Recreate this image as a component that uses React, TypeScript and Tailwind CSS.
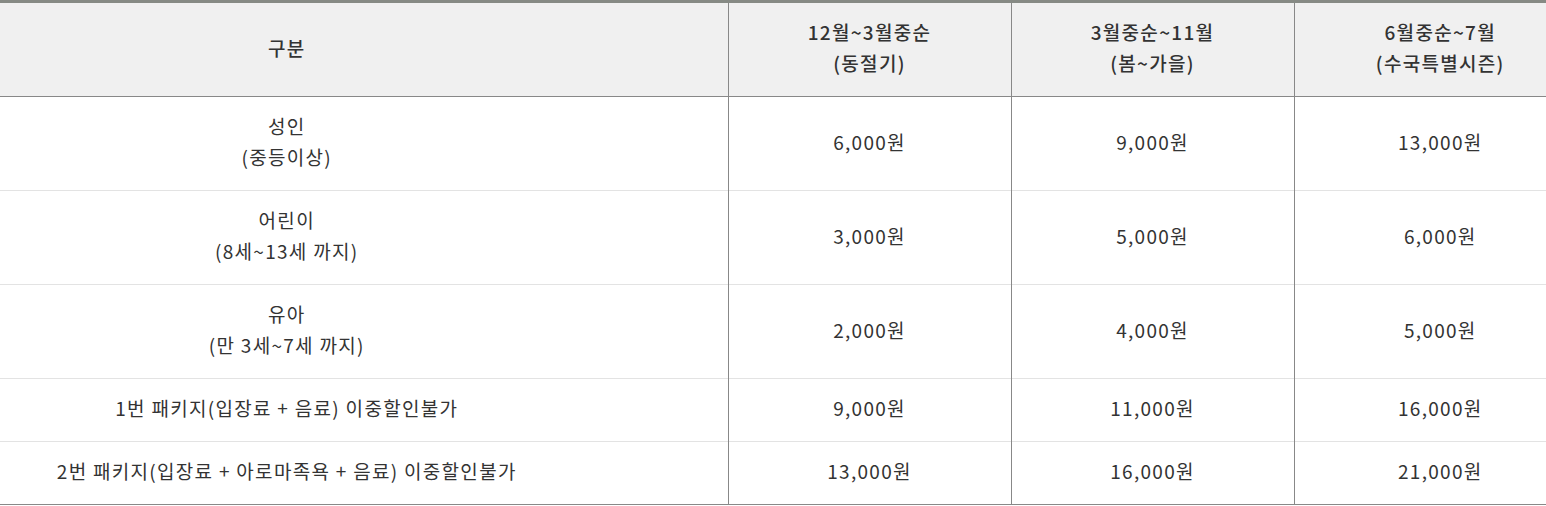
import React from "react";

const rows: { label: string[]; prices: string[]; tall: boolean }[] = [
  { label: ["성인", "(중등이상)"], prices: ["6,000원", "9,000원", "13,000원"], tall: true },
  { label: ["어린이", "(8세~13세 까지)"], prices: ["3,000원", "5,000원", "6,000원"], tall: true },
  { label: ["유아", "(만 3세~7세 까지)"], prices: ["2,000원", "4,000원", "5,000원"], tall: true },
  { label: ["1번 패키지(입장료 + 음료) 이중할인불가"], prices: ["9,000원", "11,000원", "16,000원"], tall: false },
  { label: ["2번 패키지(입장료 + 아로마족욕 + 음료) 이중할인불가"], prices: ["13,000원", "16,000원", "21,000원"], tall: false },
];

const headers = [
  ["12월~3월중순", "(동절기)"],
  ["3월중순~11월", "(봄~가을)"],
  ["6월중순~7월", "(수국특별시즌)"],
];

export default function App() {
  return (
    <div className="w-[1546px] h-[506px] overflow-hidden bg-white">
      <table
        className="-ml-[154px] w-[1740px] table-fixed border-collapse text-[19px] leading-[31px] tracking-[1.3px] text-[#333]"
        style={{ fontFamily: '"Noto Sans CJK KR", "Noto Sans", sans-serif' }}
      >
        <colgroup>
          <col className="w-[882px]" />
          <col className="w-[283px]" />
          <col className="w-[283px]" />
          <col className="w-[292px]" />
        </colgroup>
        <thead>
          <tr className="h-[95px] border-t-[3px] border-t-[#868a84] bg-[#f0f0f0] border-b border-b-[#888]">
            <th className="font-medium text-center align-middle p-0 pb-[5px]">구분</th>
            {headers.map((h, i) => (
              <th key={i} className="font-medium text-center align-middle p-0 pb-[5px] border-l border-l-[#888]">
                {h.map((l, j) => (
                  <div key={j}>{l}</div>
                ))}
              </th>
            ))}
          </tr>
        </thead>
        <tbody>
          {rows.map((r, i) => (
            <tr
              key={i}
              className={`${r.tall ? "h-[94px]" : "h-[63px]"} ${
                i === rows.length - 1 ? "border-b border-b-[#888]" : "border-b border-b-[#e3e3e3]"
              }`}
            >
              <td className="text-center align-middle p-0 pb-[5px]">
                {r.label.map((l, j) => (
                  <div key={j} className="whitespace-pre">{l}</div>
                ))}
              </td>
              {r.prices.map((p, j) => (
                <td key={j} className="text-center align-middle p-0 pb-[5px] border-l border-l-[#888]">
                  {p}
                </td>
              ))}
            </tr>
          ))}
        </tbody>
      </table>
    </div>
  );
}
